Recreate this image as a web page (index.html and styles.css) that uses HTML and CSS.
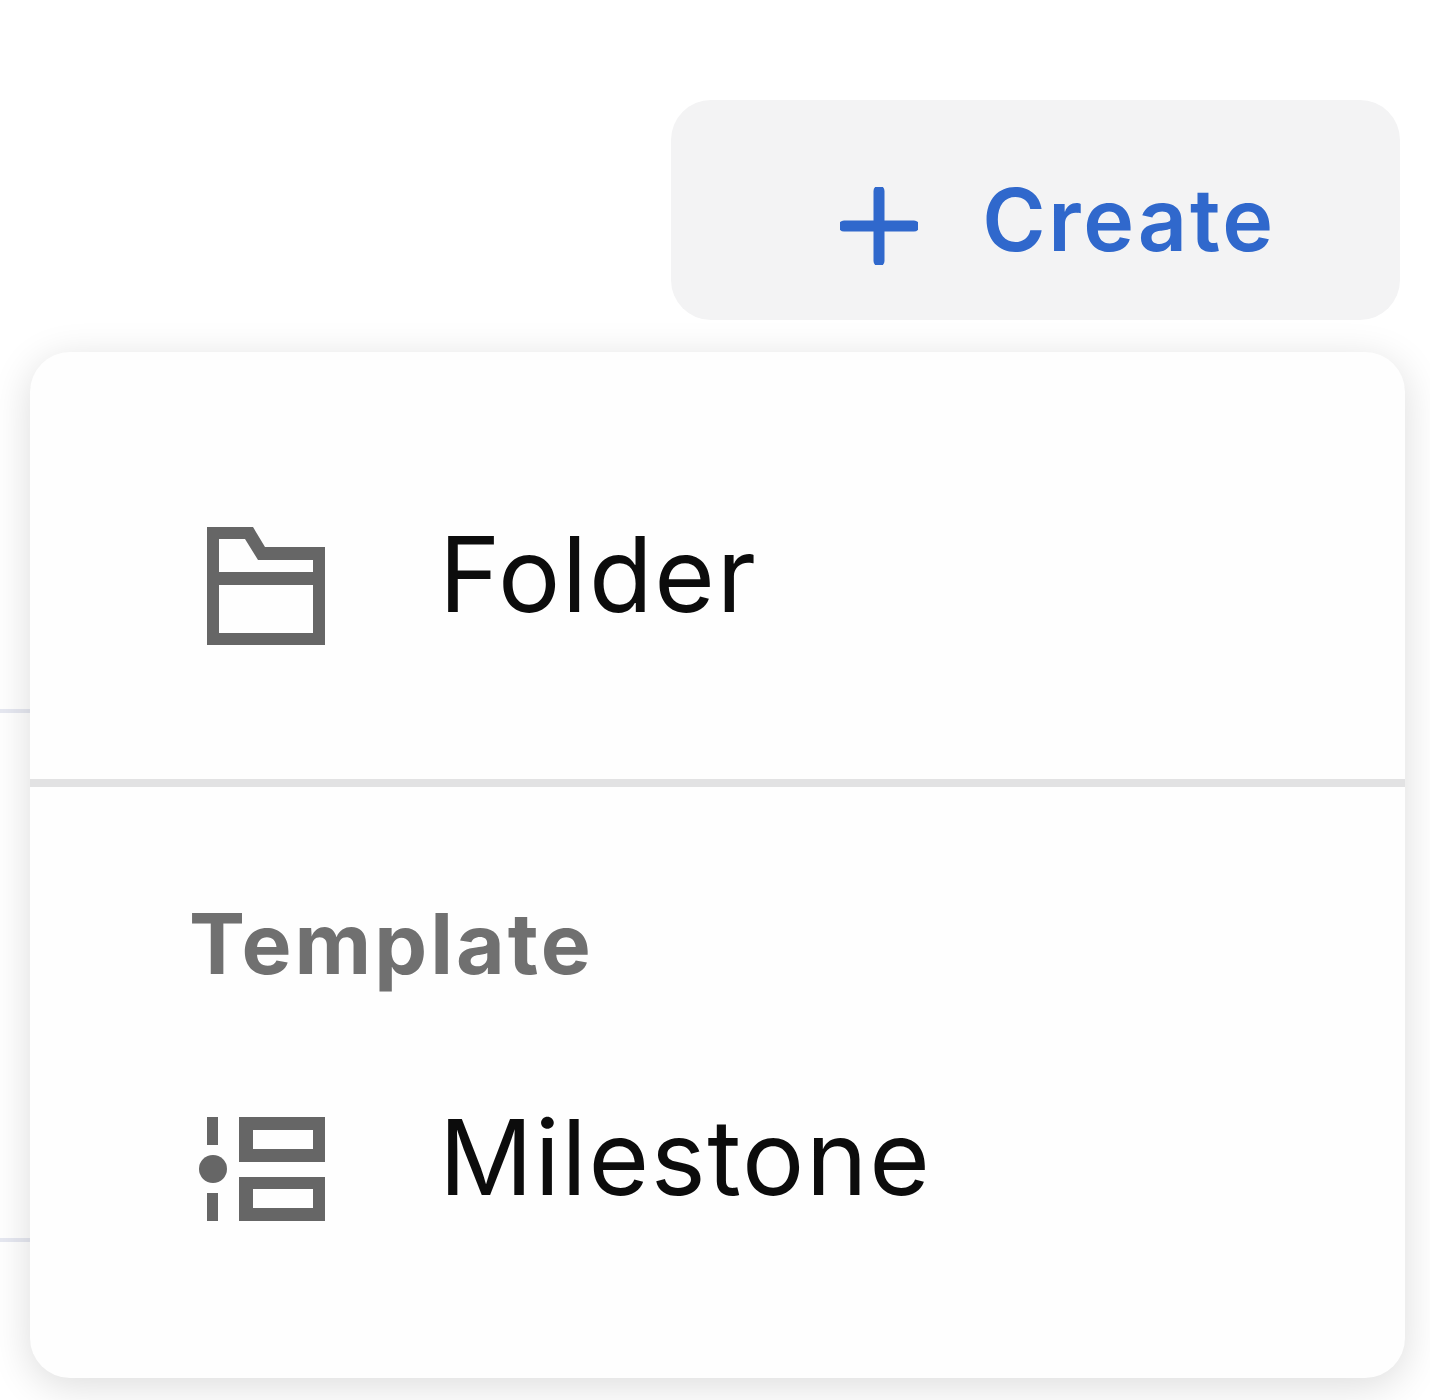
FILE: index.html
```html
<!DOCTYPE html>
<html lang="en">
<head>
<meta charset="utf-8">
<title>Create menu</title>
<link rel="stylesheet" href="styles.css">
</head>
<body>
<div class="page">
  <span class="bg-line bg-line-a"></span>
  <span class="bg-line bg-line-b"></span>
  <button class="create">
    <svg class="plus" viewBox="0 0 78 78" aria-hidden="true"><path d="M39 4V74M4 39H74"/></svg>
    <span class="create-label">Create</span>
  </button>
  <div class="menu">
    <div class="section-top">
      <div class="item">
        <svg class="icon folder" viewBox="0 0 118 118" aria-hidden="true"><path fill-rule="evenodd" d="M0 0H46L58 20H118V118H0ZM12 12H38L51 33H106V45H12ZM12 58V106H106V58Z"/></svg>
        <span class="item-text">Folder</span>
      </div>
    </div>
    <div class="section-bottom">
      <div class="label">Template</div>
      <div class="item">
        <svg class="icon milestone" viewBox="0 0 126 104" aria-hidden="true"><path fill-rule="evenodd" d="M8 0H19V28H8ZM8 76H19V104H8ZM40 0H126V45H40ZM54 13V32H114V13ZM40 60H126V104H40ZM54 72V91H114V72Z"/><circle cx="14" cy="52" r="14"/></svg>
        <span class="item-text">Milestone</span>
      </div>
    </div>
  </div>
</div>
</body>
</html>
```
FILE: styles.css
```css
* { box-sizing: border-box; }
html, body { margin: 0; background: #fff; }
body { font-family: Inter, "Liberation Sans", sans-serif; }
.page { position: relative; width: 1430px; height: 1400px; overflow: hidden; padding-top: 100px; }
.bg-line { position: absolute; left: 0; width: 40px; height: 4px; background: #e6e8f1; }
.bg-line-a { top: 709px; }
.bg-line-b { top: 1238px; }
.create {
  display: flex; align-items: center; justify-content: flex-end; gap: 64px;
  width: 729px; height: 220px; margin: 0 0 0 671px; padding: 20px 124px 0 0;
  border: 0; border-radius: 40px; background: #f3f3f4; color: #3068cc;
  font: 600 86px Inter, "Liberation Sans", sans-serif; letter-spacing: 2.8px;
}
.plus { width: 78px; height: 78px; margin-top: 12px; fill: none; stroke: #3068cc; stroke-width: 11; stroke-linecap: round; }
.menu {
  position: relative; width: 1375px; height: 1026px; margin: 32px 0 0 30px;
  border-radius: 40px; background: #fefefe;
  box-shadow: 0 8px 40px rgba(0, 0, 0, .14);
}
.section-top { height: 435px; padding: 174px 0 0 0; border-bottom: 8px solid #e2e2e3; }
.section-bottom { padding-top: 117px; }
.item { display: flex; align-items: center; height: 119px; font-size: 104px; color: #0c0c0c; }
.item-text { margin-left: 114px; position: relative; top: -12px; letter-spacing: 1.7px; }
.icon { fill: #666; display: block; margin-left: 177px; }
.folder { width: 118px; height: 118px; }
.milestone { width: 126px; height: 104px; margin-left: 169px; }
.label { margin-left: 159px; font-size: 84px; font-weight: 700; line-height: 80px; letter-spacing: 3px; color: #707070; }
.section-bottom .item { margin-top: 125px; }
```
